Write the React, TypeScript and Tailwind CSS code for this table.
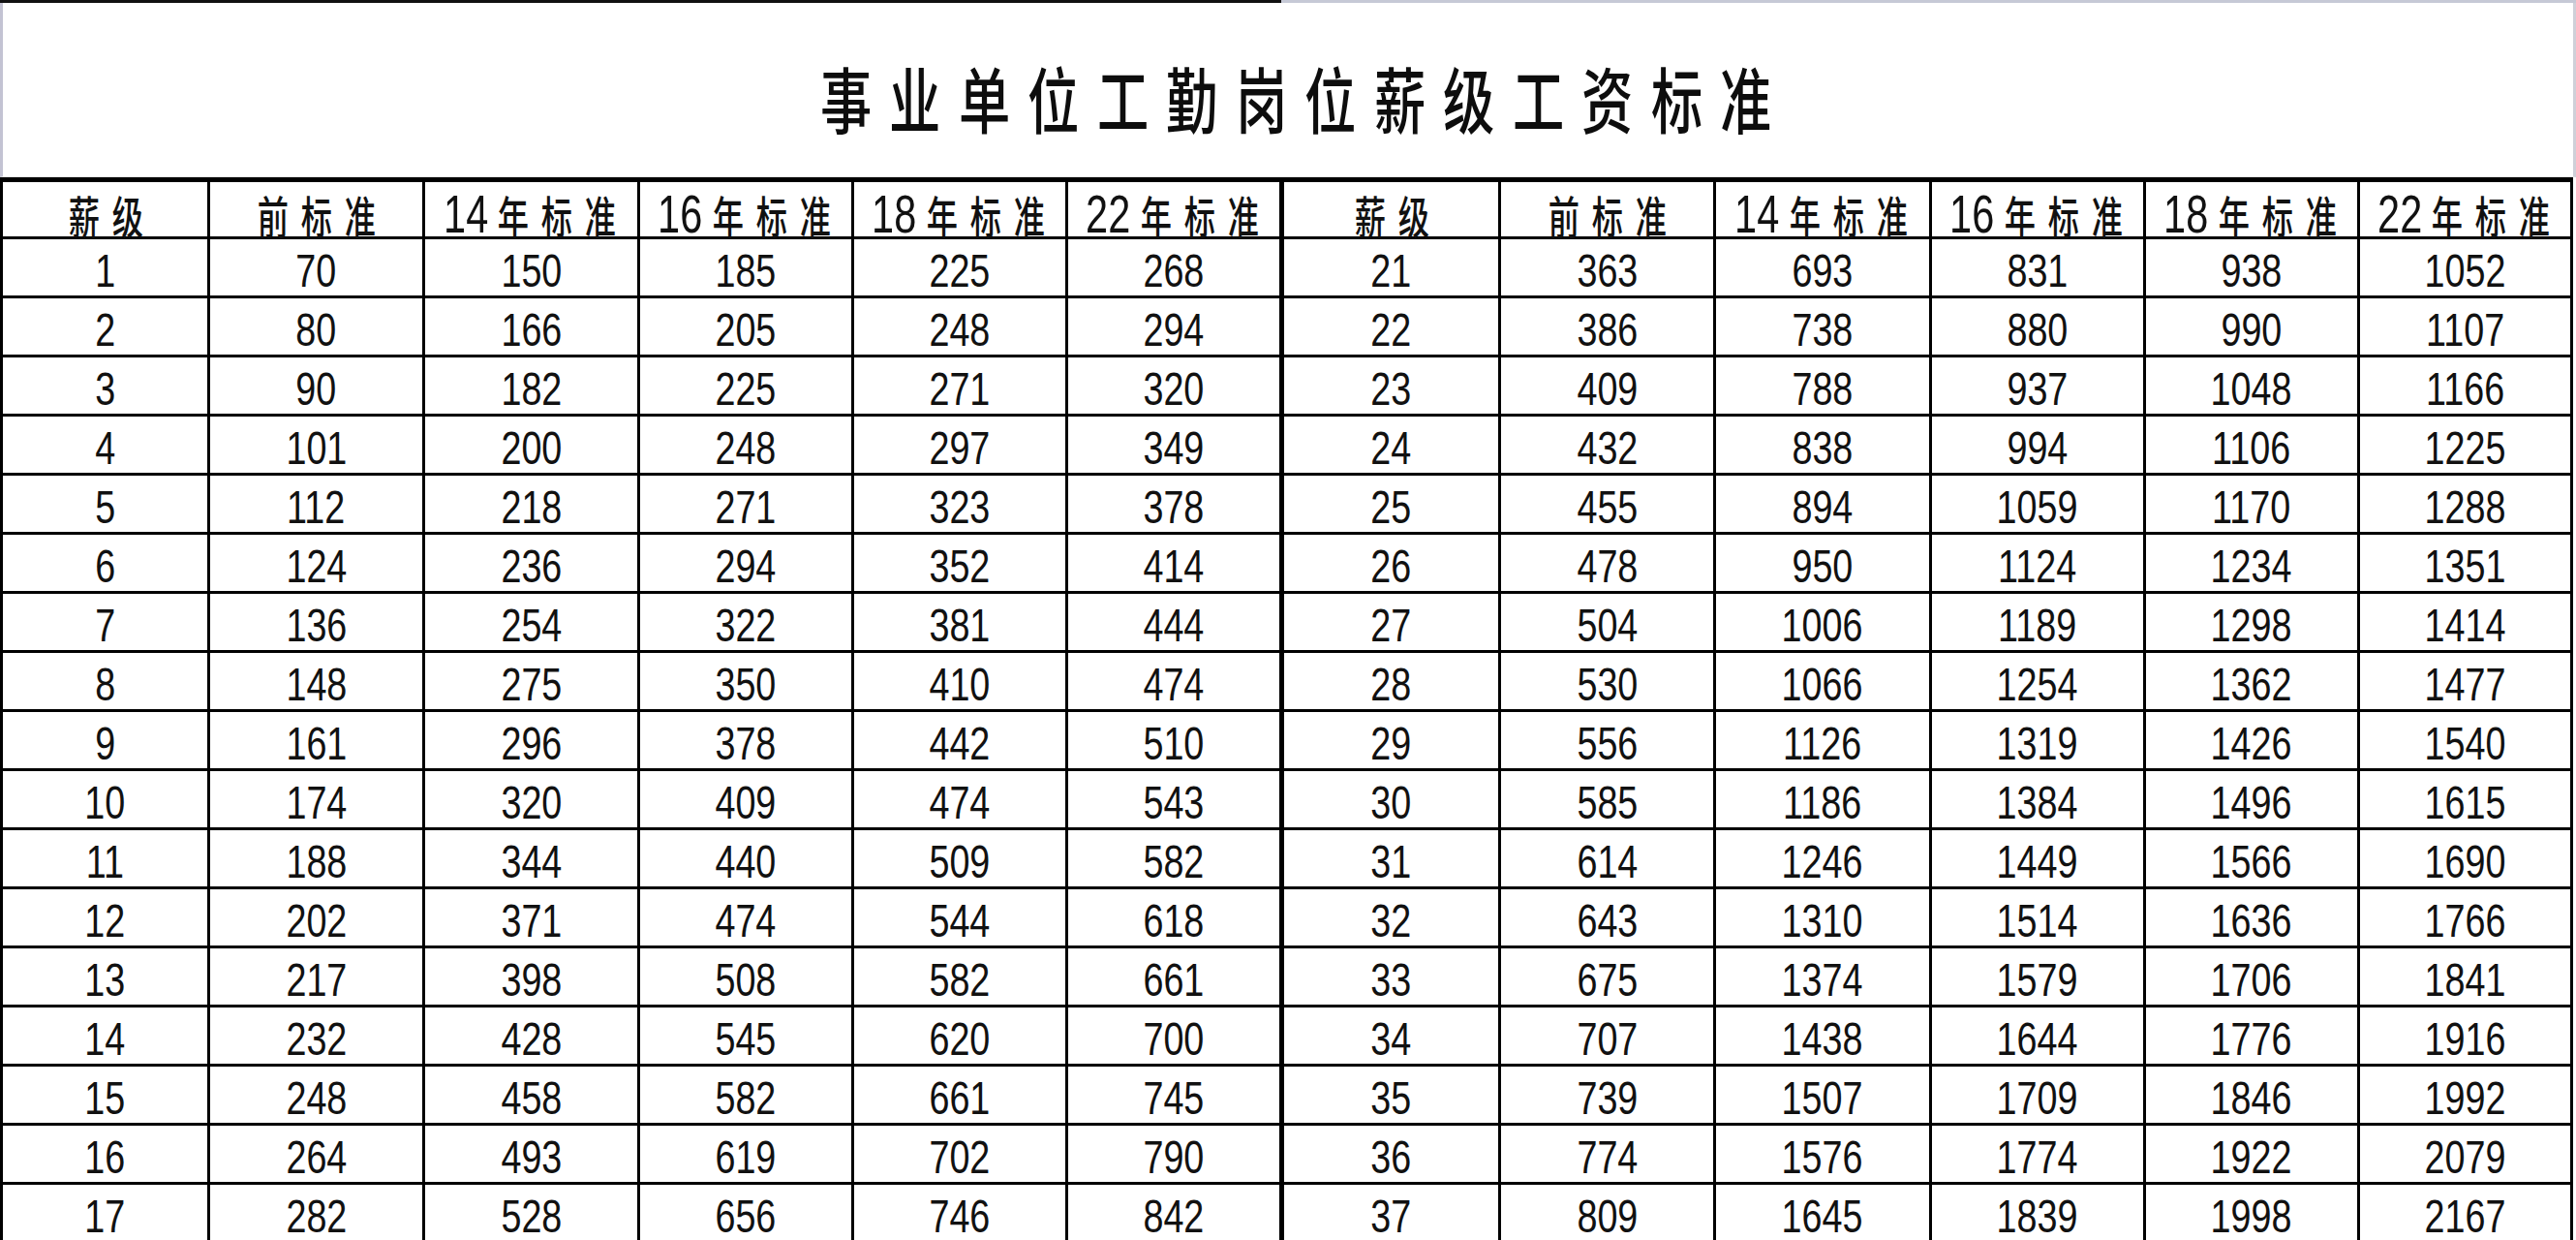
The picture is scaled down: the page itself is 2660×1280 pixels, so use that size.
const rows: number[][] = [
  [1, 70, 150, 185, 225, 268, 21, 363, 693, 831, 938, 1052],
  [2, 80, 166, 205, 248, 294, 22, 386, 738, 880, 990, 1107],
  [3, 90, 182, 225, 271, 320, 23, 409, 788, 937, 1048, 1166],
  [4, 101, 200, 248, 297, 349, 24, 432, 838, 994, 1106, 1225],
  [5, 112, 218, 271, 323, 378, 25, 455, 894, 1059, 1170, 1288],
  [6, 124, 236, 294, 352, 414, 26, 478, 950, 1124, 1234, 1351],
  [7, 136, 254, 322, 381, 444, 27, 504, 1006, 1189, 1298, 1414],
  [8, 148, 275, 350, 410, 474, 28, 530, 1066, 1254, 1362, 1477],
  [9, 161, 296, 378, 442, 510, 29, 556, 1126, 1319, 1426, 1540],
  [10, 174, 320, 409, 474, 543, 30, 585, 1186, 1384, 1496, 1615],
  [11, 188, 344, 440, 509, 582, 31, 614, 1246, 1449, 1566, 1690],
  [12, 202, 371, 474, 544, 618, 32, 643, 1310, 1514, 1636, 1766],
  [13, 217, 398, 508, 582, 661, 33, 675, 1374, 1579, 1706, 1841],
  [14, 232, 428, 545, 620, 700, 34, 707, 1438, 1644, 1776, 1916],
  [15, 248, 458, 582, 661, 745, 35, 739, 1507, 1709, 1846, 1992],
  [16, 264, 493, 619, 702, 790, 36, 774, 1576, 1774, 1922, 2079],
  [17, 282, 528, 656, 746, 842, 37, 809, 1645, 1839, 1998, 2167],
];

// [digits prefix, chinese part]
const header: [string, string][] = [
  ['', '薪级'],
  ['', '前标准'],
  ['14', '年标准'],
  ['16', '年标准'],
  ['18', '年标准'],
  ['22', '年标准'],
];

const cjk = "font-['Noto_Sans_CJK_SC','Noto_Sans_CJK_JP',sans-serif]";
const num = "font-['Liberation_Sans','Arial',sans-serif]";

function cellBorder(i: number) {
  return i === 5
    ? 'border-r-[5px] border-b-[3px] border-black'
    : 'border-r-[3px] border-b-[3px] border-black';
}

function HeadCell({ d, c, i }: { d: string; c: string; i: number }) {
  return (
    <div className={`flex items-center justify-center pt-[9px] ${cellBorder(i)}`}>
      {d && (
        <span className={`${num} inline-block text-[56px] leading-none text-[#111] scale-x-[0.74] -mx-[5px]`}>
          {d}
        </span>
      )}
      <span className={`${cjk} flex`}>
        {c.split('').map((ch, k) => (
          <span
            key={k}
            className="inline-block w-[45px] text-center text-[46px] font-medium leading-none text-[#111] scale-x-[0.7]"
          >
            {ch}
          </span>
        ))}
      </span>
    </div>
  );
}

function Cell({ v, i }: { v: number; i: number }) {
  return (
    <div className={`flex items-center justify-center pt-[7px] ${cellBorder(i)}`}>
      <span className={`${num} inline-block text-[49px] leading-none text-[#111] scale-x-[0.77]`}>
        {v}
      </span>
    </div>
  );
}

export default function App() {
  const title = '事业单位工勤岗位薪级工资标准';
  return (
    <div className="w-[2660px] h-[1280px] overflow-hidden bg-white flex flex-col">
      {/* title block */}
      <div className="flex h-[3px] shrink-0">
        <div className="w-[1323px] bg-[#111]" />
        <div className="flex-1 bg-[#c6c9d6]" />
      </div>
      <div className="h-[180px] shrink-0 border-l-[3px] border-l-[#c3c3d3] border-r-[3px] border-r-[#cfd0d8] border-b border-b-[#e6e6e6] flex items-center justify-center pt-[14px] pl-[14px]">
        <div className={`${cjk} flex`}>
          {title.split('').map((ch, k) => (
            <span
              key={k}
              className="inline-block w-[71.5px] text-center text-[74px] font-medium leading-none text-[#0d0d0d] scale-x-[0.72]"
            >
              {ch}
            </span>
          ))}
        </div>
      </div>

      {/* table */}
      <div className="w-[2657px] grid grid-cols-[214px_222px_222px_221px_221px_223px_224px_222px_223px_221px_221px_220px] grid-rows-[59px] auto-rows-[61px] border-l-[3px] border-t-[5px] border-black">
        {[...header, ...header].map(([d, c], i) => (
          <HeadCell key={`h${i}`} d={d} c={c} i={i} />
        ))}
        {rows.map((r, ri) =>
          r.map((v, i) => <Cell key={`${ri}-${i}`} v={v} i={i} />)
        )}
      </div>
    </div>
  );
}
